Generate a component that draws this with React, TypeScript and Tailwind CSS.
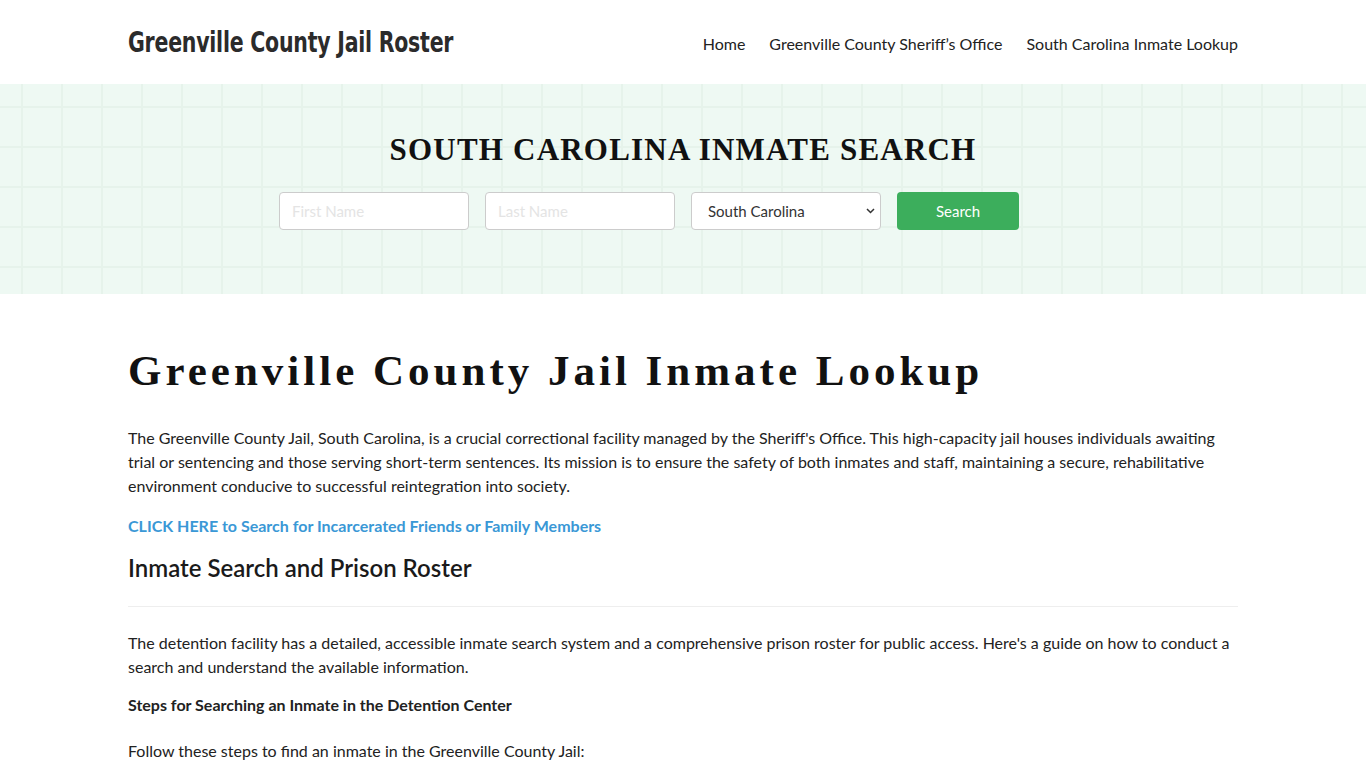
const App = () => {
  return (
    <div className="min-h-screen bg-white text-[#222] font-['Lato','Open_Sans',sans-serif]">
      {/* Header */}
      <header className="h-[84px] bg-white">
        <div className="mx-auto flex h-full w-[1110px] items-center justify-between pt-[3px]">
          <a
            href="#"
            className="inline-block origin-left whitespace-nowrap font-['DejaVu_Sans_Condensed','Roboto',sans-serif] text-[28.5px] font-bold tracking-[-0.3px] text-[#2b2b2b] scale-x-[0.8]"
          >
            Greenville County Jail Roster
          </a>
          <nav className="flex items-center gap-6 text-[16px] text-[#222]">
            <a href="#">Home</a>
            <a href="#">Greenville County Sheriff’s Office</a>
            <a href="#">South Carolina Inmate Lookup</a>
          </nav>
        </div>
      </header>

      {/* Search hero */}
      <section className="h-[210px] bg-[#eef9f3] bg-[linear-gradient(to_right,#e6f3eb_2px,transparent_2px),linear-gradient(to_bottom,#e6f3eb_2px,transparent_2px)] bg-[size:40px_40px] bg-[position:21px_22px]">
        <div className="flex flex-col items-center pt-[50px]">
          <h2 className="font-['Liberation_Serif',serif] text-[31px] font-bold leading-none tracking-[1.2px] text-[#111]">
            SOUTH CAROLINA INMATE SEARCH
          </h2>
          <form className="mr-[68px] mt-[27px] flex gap-4" onSubmit={(e) => e.preventDefault()}>
            <input
              placeholder="First Name"
              className="h-[38px] w-[190px] rounded border border-[#ccc] bg-white px-3 text-[15px] outline-none placeholder:text-[#e4e4e4]"
            />
            <input
              placeholder="Last Name"
              className="h-[38px] w-[190px] rounded border border-[#ccc] bg-white px-3 text-[15px] outline-none placeholder:text-[#e4e4e4]"
            />
            <div className="relative h-[38px] w-[190px] rounded border border-[#ccc] bg-white">
              <select className="h-full w-full appearance-none bg-transparent px-4 text-[15px] text-[#333] outline-none">
                <option>South Carolina</option>
              </select>
              <svg
                className="pointer-events-none absolute right-[5px] top-[15px]"
                width="9"
                height="6"
                viewBox="0 0 9 6"
              >
                <path d="M1 1l3.5 3.5L8 1" stroke="#333" strokeWidth="1.5" fill="none" />
              </svg>
            </div>
            <button className="h-[38px] w-[122px] rounded bg-[#3cae5c] text-[15px] text-white">
              Search
            </button>
          </form>
        </div>
      </section>

      {/* Main content */}
      <main className="mx-auto w-[1110px] pt-[51px]">
        <h1 className="font-['Liberation_Serif',serif] text-[43px] font-bold leading-[1.2] tracking-[4px] text-[#111]">
          Greenville County Jail Inmate Lookup
        </h1>
        <p className="mt-[29px] text-[16px] leading-6">
          The Greenville County Jail, South Carolina, is a crucial correctional facility managed by the Sheriff's
          Office. This high-capacity jail houses individuals awaiting trial or sentencing and those serving short-term
          sentences. Its mission is to ensure the safety of both inmates and staff, maintaining a secure,
          rehabilitative environment conducive to successful reintegration into society.
        </p>
        <p className="mt-4 text-[16px] leading-6">
          <a href="#" className="font-bold text-[#3a98d6]">
            CLICK HERE to Search for Incarcerated Friends or Family Members
          </a>
        </p>
        <h3 className="mt-[16px] text-[24px] font-semibold leading-[1.2] text-[#1a1a1a]">
          Inmate Search and Prison Roster
        </h3>
        <hr className="mt-[24px] border-t border-[#eee]" />
        <p className="mt-[24px] text-[16px] leading-6">
          The detention facility has a detailed, accessible inmate search system and a comprehensive prison roster for
          public access. Here's a guide on how to conduct a search and understand the available information.
        </p>
        <p className="mt-[14px] text-[16px] font-bold leading-6">
          Steps for Searching an Inmate in the Detention Center
        </p>
        <p className="mt-[22px] text-[16px] leading-6">
          Follow these steps to find an inmate in the Greenville County Jail:
        </p>
        <ol className="mt-4 list-decimal pl-10 text-[16px] leading-6">
          <li>Visit the official website of the Greenville County Sheriff's Office.</li>
        </ol>
      </main>
    </div>
  );
};

export default App;
